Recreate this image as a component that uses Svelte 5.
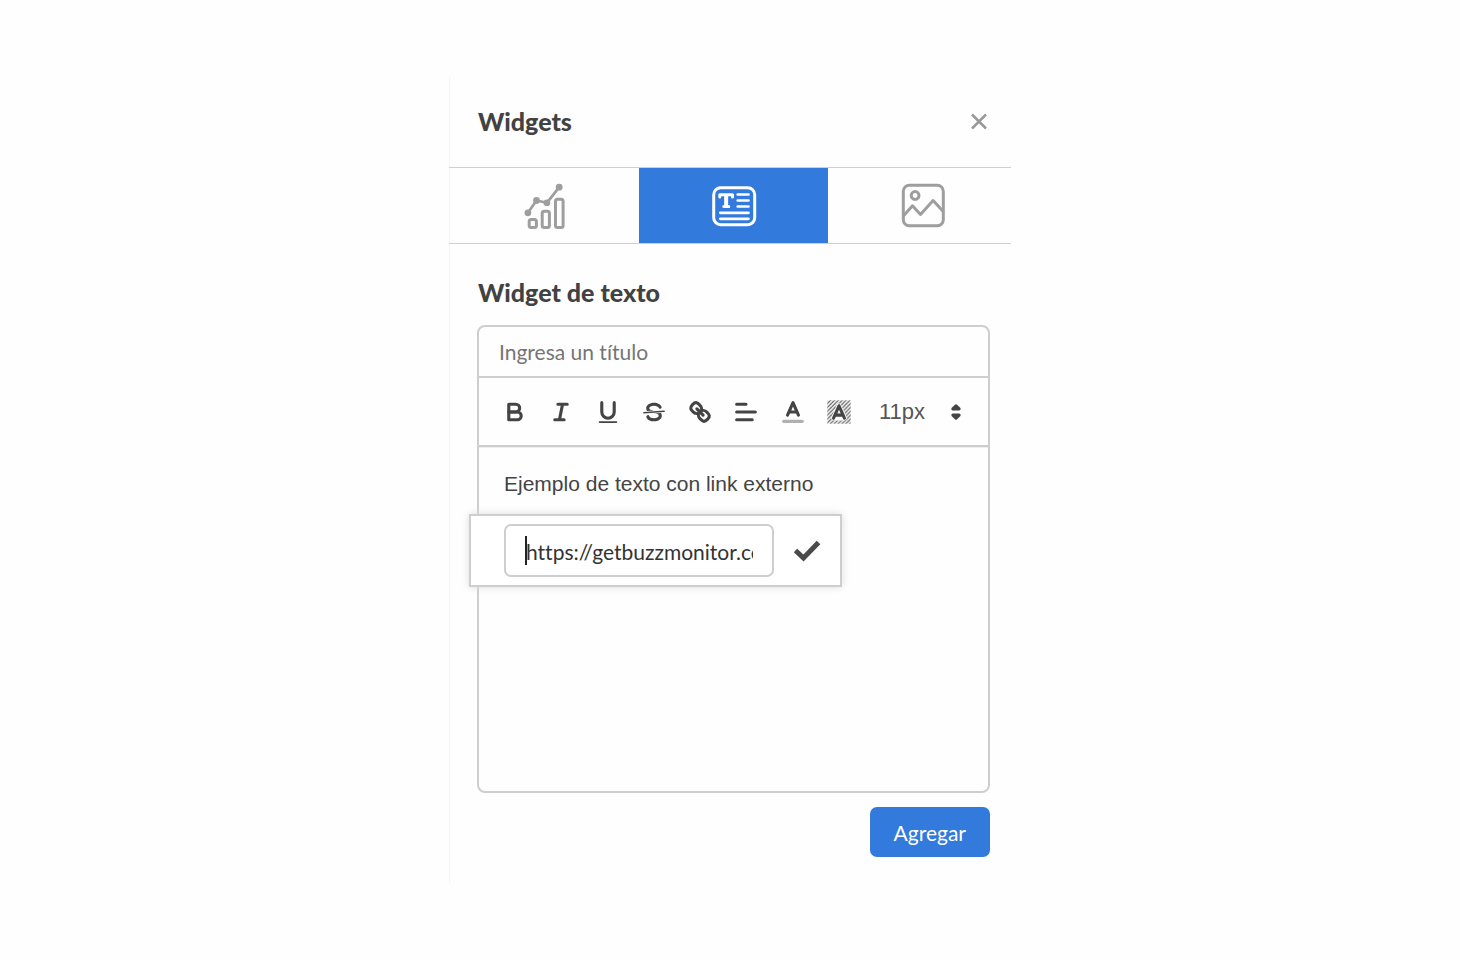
<script lang="ts">
  const tabs = ['chart', 'text', 'image'];
  const tabLabels: Record<string, string> = { chart: 'Gráfico', text: 'Texto', image: 'Imagen' };
  const tools = ['bold', 'italic', 'underline', 'strike', 'link', 'align', 'color', 'background'];
  const sizes = ['9px', '11px', '14px', '18px'];

  let activeTab = $state('text');
  let title = $state('');
  let size = $state('11px');
  let link = $state('https://getbuzzmonitor.com');
  let linkOpen = $state(true);
</script>

<main class="page">
  <section class="panel">
    <header class="panel-header">
      <h1>Widgets</h1>
      <button class="close-btn" aria-label="Cerrar">
        <svg width="18" height="18" viewBox="0 0 18 18"><path d="M2 2.500l14 14M16 2.500l-14 14" /></svg>
      </button>
    </header>

    <nav class="tabs">
      {#each tabs as tab (tab)}
        <button
          class="tab"
          class:active={activeTab === tab}
          aria-label={tabLabels[tab]}
          onclick={() => (activeTab = tab)}
        >
          <svg width="48" height="48" viewBox="0 0 48 48">
            {#if tab === 'chart'}
              <rect x="9.200" y="37.500" width="7.200" height="8" rx="2" />
              <rect x="22.200" y="29.200" width="7.200" height="16.300" rx="2" />
              <rect x="35.500" y="17.200" width="7.600" height="28.300" rx="2" />
              <path class="thin" d="M7.900 30.800L16.500 18.500L26.900 20.800L39.200 5.200" />
              <circle class="dot" cx="7.900" cy="30.800" r="3.400" />
              <circle class="dot" cx="16.500" cy="18.500" r="3.400" />
              <circle class="dot" cx="26.900" cy="20.800" r="3.400" />
              <circle class="dot" cx="39.200" cy="5.200" r="3.400" />
            {:else if tab === 'text'}
              <rect x="3.700" y="5.700" width="41" height="37" rx="7" />
              <path d="M9.800 15v-2.300h12.700V15M13.800 24.500h5" />
              <path class="stem" d="M16.150 13v11" />
              <path class="thin" d="M27.700 12.500h10.800M27.700 18.500h10.800M27.700 24.500h10.800M10.300 30.800h28.200M10.300 36.800h28.200" />
            {:else}
              <rect x="4.300" y="3.300" width="40" height="40.400" rx="6" />
              <circle cx="16.100" cy="13.500" r="3.900" />
              <path d="M4.800 33.500L13.500 23.800L21.500 32.500L34.100 18.500L44 29.200" />
            {/if}
          </svg>
        </button>
      {/each}
    </nav>

    <div class="panel-body">
      <h2>Widget de texto</h2>

      <div class="editor">
        <input class="title-input" type="text" placeholder="Ingresa un título" aria-label="Título" bind:value={title} />

        <div class="toolbar">
          <div class="tools">
            {#each tools as tool (tool)}
              <button class="tool" aria-label={tool} onclick={() => tool === 'link' && (linkOpen = !linkOpen)}>
                <svg width="28" height="28" viewBox="0 0 18 18">
                  {#if tool === 'bold'}
                    <path d="M5 4h4.500a2.500 2.500 0 0 1 0 5H5z" />
                    <path d="M5 9h5.500a2.500 2.500 0 0 1 0 5H5z" />
                  {:else if tool === 'italic'}
                    <path d="M7 4h6M5 14h6M8 14l2-10" />
                  {:else if tool === 'underline'}
                    <path d="M5 3v6a4 4 0 0 0 8 0V3" />
                    <rect class="fill" x="3" y="15" width="12" height="1" rx="0.500" />
                  {:else if tool === 'strike'}
                    <path class="hair" d="M15.500 8.500l-13 1" />
                    <path class="fill" d="M9 8C6.540 7.790 6 7.520 6 6.500 6 5.790 7.280 5 9 5c1.570 0 2.770.680 2.970 1.310a1 1 0 0 0 1.900-.620C13.360 4.110 11.350 3 9 3 6.200 3 4 4.540 4 6.500a3.200 3.200 0 0 0 .500 1.840z" />
                    <path class="fill" d="M9 10c2.460.210 3 .480 3 1.500 0 .710-1.280 1.500-3 1.500-1.570 0-2.770-.680-2.970-1.310a1 1 0 1 0-1.900.620C4.640 13.890 6.650 15 9 15c2.800 0 5-1.540 5-3.500a3.200 3.200 0 0 0-.500-1.840z" />
                  {:else if tool === 'link'}
                    <path d="M7 7l4 4" />
                    <path d="M8.900 4.577a3.476 3.476 0 0 1 .360 4.679A3.476 3.476 0 0 1 4.577 8.900C3.185 7.500 2.035 6.400 4.217 4.217S7.500 3.185 8.900 4.577z" />
                    <path d="M13.423 9.100a3.476 3.476 0 0 0-4.679-.360 3.476 3.476 0 0 0 .360 4.679c1.392 1.392 2.500 2.542 4.679.360S14.815 10.500 13.423 9.100z" />
                  {:else if tool === 'align'}
                    <path d="M3 4h6M3 9h12M3 14h10" />
                  {:else if tool === 'color'}
                    <path class="swatch" d="M3 15h12" />
                    <path d="M5.500 11L9 3l3.500 8M11.600 9H6.400" />
                  {:else}
                    <defs>
                      <pattern id="hatch" width="2.500" height="2.500" patternUnits="userSpaceOnUse">
                        <path class="hatch" d="M-0.500 0.500l1-1M-0.500 3l3.500-3.500M2 3l1-1" />
                      </pattern>
                    </defs>
                    <rect x="1.500" y="1.500" width="15" height="15" fill="url(#hatch)" stroke="none" />
                    <path class="halo" d="M5.500 13L9 5l3.500 8z" />
                    <path d="M5.500 13L9 5l3.500 8M11.600 11H6.400" />
                  {/if}
                </svg>
              </button>
            {/each}
          </div>

          <label class="size">
            <select aria-label="Tamaño" bind:value={size}>
              {#each sizes as option (option)}
                <option value={option}>{option}</option>
              {/each}
            </select>
            <svg width="28" height="28" viewBox="0 0 18 18">
              <path class="solid" d="M7 11l2 2 2-2zM7 7l2-2 2 2z" />
            </svg>
          </label>
        </div>

        <div class="content">
          <p>Ejemplo de texto con link externo</p>

          {#if linkOpen}
            <form class="link-tip" onsubmit={(e) => { e.preventDefault(); linkOpen = false; }}>
              <span class="link-field">
                <input type="text" aria-label="Enlace" bind:value={link} />
                <span class="caret"></span>
              </span>
              <button class="check-btn" aria-label="Guardar">
                <svg width="28" height="22" viewBox="0 0 28 22"><path d="M2.500 10.500l8 7.500L25.500 2.500" /></svg>
              </button>
            </form>
          {/if}
        </div>
      </div>

      <div class="actions">
        <button class="submit-btn">Agregar</button>
      </div>
    </div>
  </section>
</main>

<style>
  :global(body) {
    background: #fefefe;
  }

  * {
    box-sizing: border-box;
  }

  button {
    border: none;
    background: none;
    padding: 0;
    cursor: pointer;
  }

  svg {
    display: block;
    fill: none;
    stroke: currentColor;
    stroke-linecap: round;
    stroke-linejoin: round;
  }

  .page {
    padding: 77px 16px;
    color: #444;
    font-family: Lato, "Open Sans", sans-serif;
    font-variant-ligatures: none;
  }

  .panel {
    max-width: 562px;
    margin: 0 auto;
    box-shadow: inset 1px 0 #f4f4f4;
    overflow: hidden;
  }

  .panel-header {
    display: flex;
    align-items: center;
    justify-content: space-between;
    height: 90px;
    padding: 0 23px 3px 29px;
  }

  h1,
  h2 {
    margin: 0;
    font-size: 25px;
    line-height: 32px;
    font-weight: 900;
    color: #424242;
  }

  .close-btn {
    color: #999;
  }

  .close-btn svg {
    stroke-width: 2.5;
    stroke-linecap: butt;
  }

  /* The last tab runs past the panel edge */
  .tabs {
    display: flex;
    margin-right: -7px;
    border-top: 1px solid #d0d0d0;
    border-bottom: 1px solid #d0d0d0;
  }

  .tab {
    flex: 1;
    display: flex;
    align-items: center;
    justify-content: center;
    height: 75px;
    color: #9e9e9e;
  }

  .tab svg {
    stroke-width: 3;
  }

  .tab.active {
    background: #327adc;
    color: #fff;
  }

  .tab .thin {
    stroke-width: 2.7;
  }

  .tab .stem {
    stroke-width: 4;
    stroke-linecap: butt;
  }

  .tab .dot {
    fill: currentColor;
    stroke: none;
  }

  .panel-body {
    padding: 32px 21px 26px 28px;
  }

  h2 {
    padding-left: 1px;
  }

  .editor {
    margin-top: 17px;
    border: 2px solid #cecece;
    border-radius: 8px;
  }

  .title-input {
    display: block;
    width: 100%;
    height: 49px;
    padding: 0 20px;
    border: none;
    background: none;
    font: 21px Lato, sans-serif;
    font-variant-ligatures: none;
    color: #444;
    outline: none;
  }

  .title-input::placeholder {
    color: #757575;
    opacity: 1;
  }

  .toolbar {
    display: flex;
    align-items: center;
    justify-content: space-between;
    height: 71px;
    padding: 0 18px 0 22px;
    border-top: 2px solid #cecece;
    border-bottom: 2px solid #cecece;
  }

  .tools {
    display: flex;
    justify-content: space-between;
    width: 352px;
  }

  .tool svg,
  .size svg {
    color: #444;
    stroke-width: 2;
  }

  .tool .fill {
    fill: currentColor;
    stroke: none;
  }

  .tool .hair {
    stroke-width: 1;
  }

  .tool .swatch {
    stroke: #b0b0b0;
  }

  .tool .hatch {
    stroke-width: 0.7;
    stroke-dasharray: 1.3 0.5;
  }

  .tool .halo {
    stroke: #fff;
    stroke-width: 3;
  }

  .size {
    display: flex;
    align-items: center;
    gap: 15px;
  }

  .size .solid {
    fill: currentColor;
  }

  select {
    appearance: none;
    padding: 0;
    border: none;
    background: none;
    font: 22px "Liberation Sans", Arial, sans-serif;
    color: #555;
  }

  .content {
    position: relative;
    min-height: 344px;
    padding: 20px 25px;
    border-top: 1px solid #eee;
  }

  .content p {
    margin: 0;
    font: 21px/32px "Liberation Sans", Arial, sans-serif;
  }

  .link-tip {
    position: absolute;
    top: 66px;
    left: -10px;
    display: flex;
    align-items: center;
    gap: 19px;
    padding: 8px 19px 8px 33px;
    border: 2px solid #cecece;
    background: #fff;
    box-shadow: 0 0 8px #ddd;
  }

  .link-field {
    position: relative;
    display: flex;
  }

  .link-field input {
    width: 270px;
    height: 53px;
    padding: 2px 19px 0 20px;
    border: 2px solid #cecece;
    border-radius: 7px;
    font: 21px Lato, sans-serif;
    font-variant-ligatures: none;
    color: #333;
    outline: none;
  }

  .caret {
    position: absolute;
    top: 12px;
    left: 21px;
    width: 2px;
    height: 29px;
    background: #222;
  }

  .check-btn svg {
    color: #4a4a4a;
    stroke-width: 5;
    stroke-linecap: butt;
    stroke-linejoin: miter;
  }

  .actions {
    display: flex;
    justify-content: flex-end;
    margin-top: 14px;
  }

  .submit-btn {
    height: 50px;
    padding: 0 24px;
    border-radius: 7px;
    background: #327adc;
    color: #fff;
    font: 21px Lato, sans-serif;
  }
</style>
